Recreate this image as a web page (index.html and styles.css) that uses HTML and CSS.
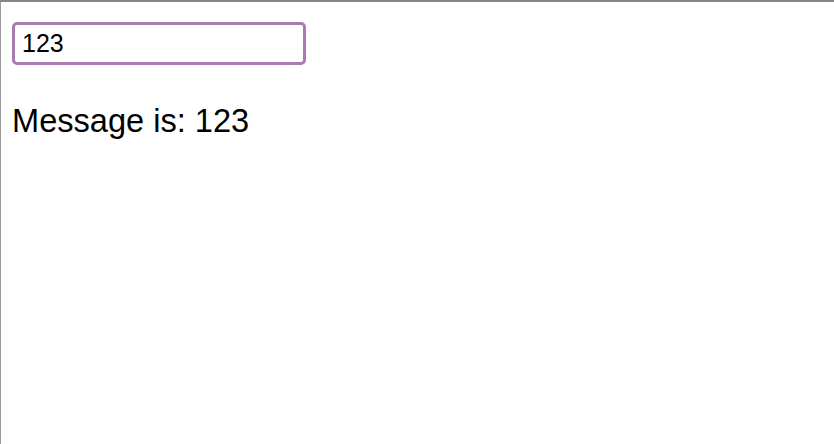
FILE: index.html
```html
<!DOCTYPE html>
<html lang="en">
<head>
<meta charset="utf-8">
<title>Message</title>
<link rel="stylesheet" href="styles.css">
</head>
<body>
<div class="frame">
  <input class="msg-input" type="text" value="123">
  <p class="msg-output">Message is: 123</p>
</div>
</body>
</html>
```

FILE: styles.css
```css
html, body {
  margin: 0;
  padding: 0;
  background: #fff;
}
.frame {
  box-sizing: border-box;
  height: 444px;
  border-top: 2px solid #858585;
  border-left: 1px solid #9a9a9a;
  padding: 20px 0 0 11px;
  font-family: "Liberation Sans", Arial, sans-serif;
  color: #000;
}
.msg-input {
  display: block;
  box-sizing: border-box;
  width: 294px;
  height: 43px;
  margin: 0;
  border: 3px solid #a87cae;
  border-radius: 5px;
  padding: 0 7px;
  font-family: "Liberation Sans", Arial, sans-serif;
  font-size: 25px;
  color: #000;
  outline: none;
  background: #fff;
}
.msg-output {
  margin: 37px 0 0;
  font-size: 32.6px;
  line-height: 37px;
}
```
